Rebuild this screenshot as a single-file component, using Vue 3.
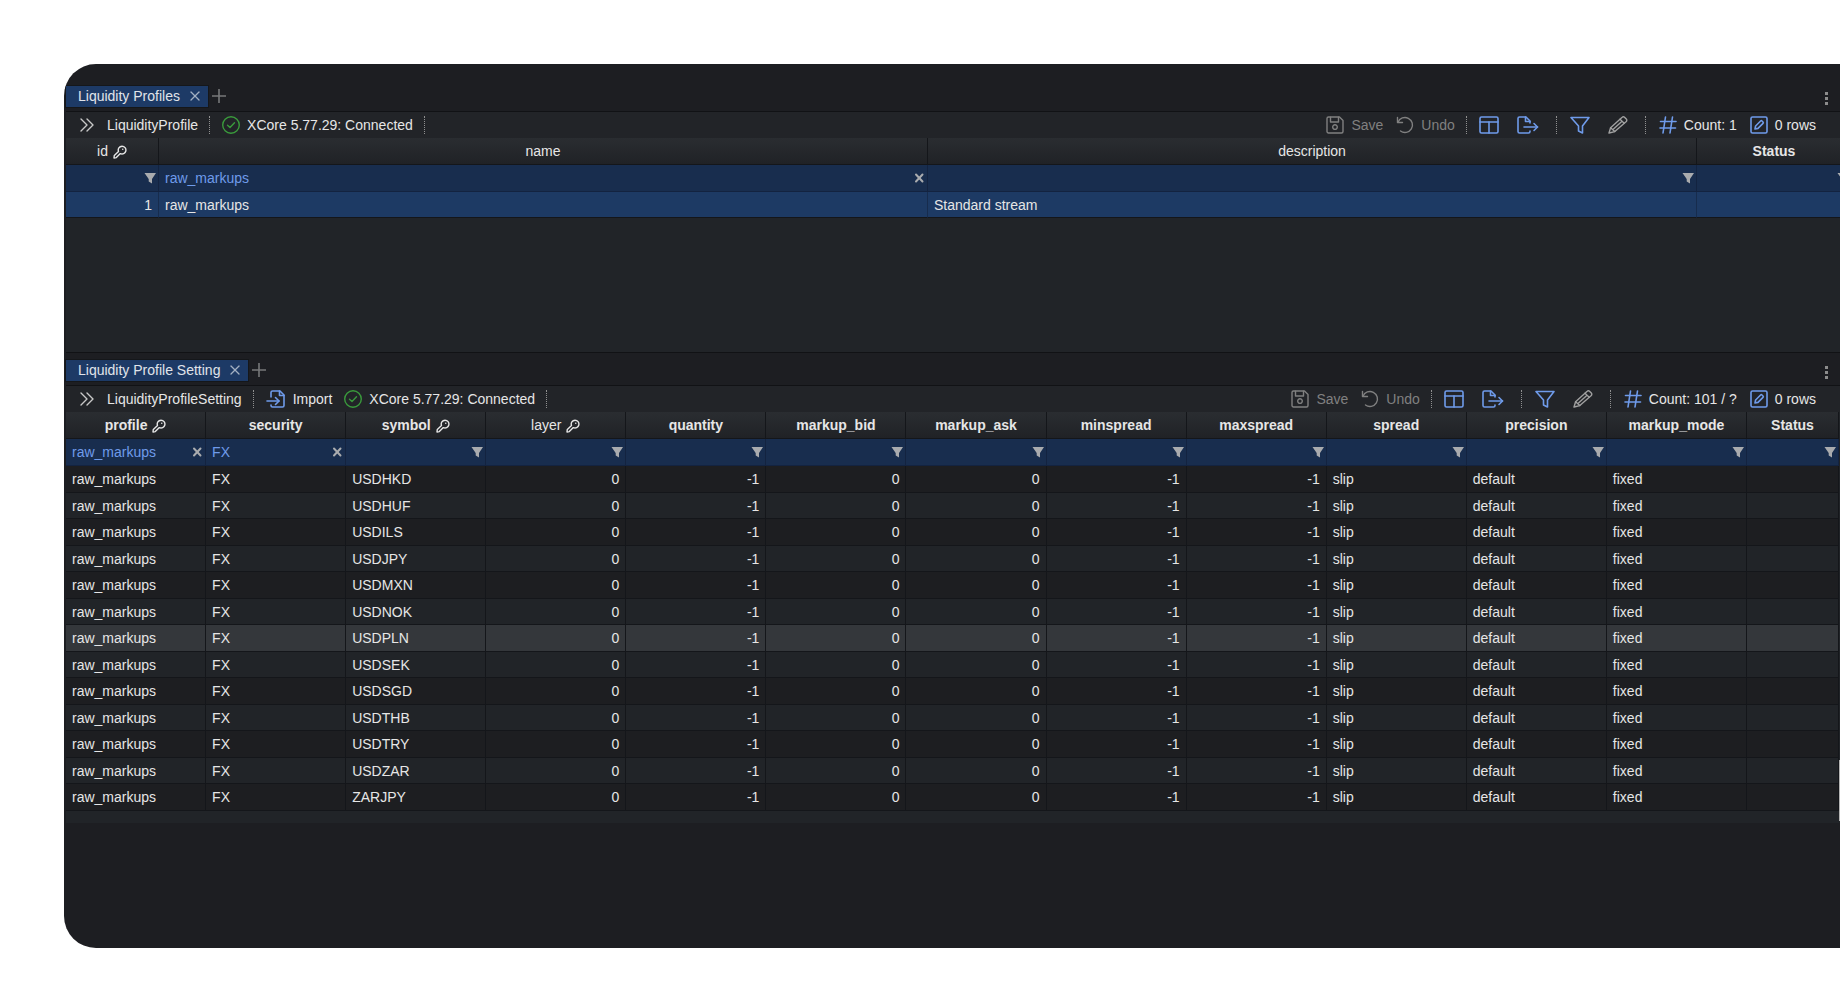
<script setup>
import { ref, h } from 'vue'

const shapes = {
  chevrons: ['M3 3l6 6-6 6', 'M9 3l6 6-6 6'],
  check: ['M9 0.700a8.300 8.300 0 1 0 0 16.600a8.300 8.300 0 1 0 0-16.600z', 'M5.500 9.200l2.500 2.300 4.500-4.800'],
  save: ['M2.500 1h11l3.500 3.500v11a1.500 1.500 0 0 1-1.500 1.500h-13A1.500 1.500 0 0 1 1 15.500v-13A1.500 1.500 0 0 1 2.500 1z', 'M4.500 1.300v4.700h8V1.300', 'M9 8.800a2.300 2.300 0 1 0 0 4.600a2.300 2.300 0 1 0 0-4.600z'],
  undo: ['M1.500 1.500v5h5', 'M2 6.200A7.500 7.500 0 1 1 4.500 15'],
  layout: ['M2.500 1h15a1.500 1.500 0 0 1 1.500 1.500v13a1.500 1.500 0 0 1-1.500 1.500h-15A1.500 1.500 0 0 1 1 15.500v-13A1.500 1.500 0 0 1 2.500 1z', 'M1 6h18', 'M10 6v11'],
  exporting: ['M13 7V5L9 1H2.500A1.500 1.500 0 0 0 1 2.500v13A1.500 1.500 0 0 0 2.500 17h9a1.500 1.500 0 0 0 1.500-1.500V15', 'M8.500 1v4.500H13', 'M7 11h13.500', 'M17 7.500l3.500 3.500-3.500 3.500'],
  importing: ['M5 7V2.500A1.500 1.500 0 0 1 6.500 1H14l4 4v10.500a1.500 1.500 0 0 1-1.500 1.500h-10A1.500 1.500 0 0 1 5 15.500V15', 'M13.500 1v4.500H18', 'M1 11h12', 'M9.500 7.500l3.500 3.500-3.500 3.500'],
  filter: ['M1 1.500h18l-6.500 8.500v7l-4-2v-5z'],
  pencil: ['M1 17l1.600-5.300L14.200 1.300a1.600 1.600 0 0 1 2.300 0l1.800 1.800a1.600 1.600 0 0 1 0 2.300L6.800 15.600z', 'M2.600 11.700l4.200 3.900', 'M12 3.300l4.200 4', 'M5.500 13l8-7.300'],
  hash: ['M6.500 1L4 17', 'M13.500 1L11 17', 'M1.500 5.500h15.500', 'M1 12h15.500'],
  edit: ['M2.500 1h13A1.500 1.500 0 0 1 17 2.500v13a1.500 1.500 0 0 1-1.500 1.500h-13A1.500 1.500 0 0 1 1 15.500v-13A1.500 1.500 0 0 1 2.500 1z', 'M5 13l.6-3 5-5a1 1 0 0 1 1.400 0l1 1a1 1 0 0 1 0 1.400L8 12.400z'],
  key: ['M9 1.200a3.900 3.900 0 1 1-1.700 7.400L3.300 12.600 1 13l.3-2.600 4.200-3.900A3.900 3.900 0 0 1 9 1.200z', 'M9.700 4.300h.1'],
  cross: ['M2 2l8 8', 'M10 2l-8 8'],
  clear: ['M3 2.500l6.500 7', 'M9.500 2.500l-6.500 7'],
  plus: ['M7 0v14', 'M0 7h14'],
}

const Glyph = (props) =>
  h('svg', { class: 'glyph', width: props.w, height: props.h, viewBox: `0 0 ${props.w} ${props.h}`, 'aria-hidden': 'true' },
    shapes[props.name].map((d) => h('path', { d, fill: 'none', stroke: 'currentColor', 'stroke-width': props.sw || 1.4, 'stroke-linejoin': 'round', 'stroke-linecap': 'round' })))
Glyph.props = ['name', 'w', 'h', 'sw']

const symbols = ['USDHKD', 'USDHUF', 'USDILS', 'USDJPY', 'USDMXN', 'USDNOK', 'USDPLN', 'USDSEK', 'USDSGD', 'USDTHB', 'USDTRY', 'USDZAR', 'ZARJPY']
const selected = 'USDPLN'

const panels = ref([
  {
    tab: 'Liquidity Profiles',
    source: 'LiquidityProfile',
    count: '1',
    wide: true,
    columns: [
      { name: 'id', key: true, num: true, size: 'id', filter: '' },
      { name: 'name', filter: 'raw_markups' },
      { name: 'description', filter: '' },
      { name: 'Status', bold: true, size: 'status-wide', filter: '' },
    ],
    rows: [{ cells: ['1', 'raw_markups', 'Standard stream', ''], active: true }],
  },
  {
    tab: 'Liquidity Profile Setting',
    source: 'LiquidityProfileSetting',
    count: '101 / ?',
    canImport: true,
    columns: [
      { name: 'profile', key: true, bold: true, filter: 'raw_markups' },
      { name: 'security', bold: true, filter: 'FX' },
      { name: 'symbol', key: true, bold: true, filter: '' },
      { name: 'layer', key: true, num: true, filter: '' },
      { name: 'quantity', bold: true, num: true, filter: '' },
      { name: 'markup_bid', bold: true, num: true, filter: '' },
      { name: 'markup_ask', bold: true, num: true, filter: '' },
      { name: 'minspread', bold: true, num: true, filter: '' },
      { name: 'maxspread', bold: true, num: true, filter: '' },
      { name: 'spread', bold: true, filter: '' },
      { name: 'precision', bold: true, filter: '' },
      { name: 'markup_mode', bold: true, filter: '' },
      { name: 'Status', bold: true, size: 'status', filter: '' },
    ],
    rows: symbols.map((s) => ({
      cells: ['raw_markups', 'FX', s, '0', '-1', '0', '0', '-1', '-1', 'slip', 'default', 'fixed', ''],
      hover: s === selected,
    })),
  },
])
</script>

<template>
  <main class="window">
    <section v-for="p in panels" :key="p.tab" class="panel" :class="{ wide: p.wide }">
      <header class="tabs">
        <div class="tab">
          <a href="#" class="tab-name">{{ p.tab }}</a>
          <button class="tab-close" :aria-label="'Close ' + p.tab"><Glyph name="cross" w="12" h="12" sw="1.300" /></button>
        </div>
        <button class="add" aria-label="Add tab"><Glyph name="plus" w="14" h="14" sw="1.600" /></button>
        <button class="more" aria-label="More"><i></i><i></i><i></i></button>
      </header>

      <div class="toolbar">
        <div class="group left">
          <button class="expand" aria-label="Expand"><Glyph name="chevrons" w="18" h="18" /></button>
          <span class="source">{{ p.source }}</span>
          <span class="sep"></span>
          <button v-if="p.canImport" class="tool import"><Glyph name="importing" w="20" h="18" class="blue" sw="1.600" />Import</button>
          <span class="tool state"><Glyph name="check" w="18" h="18" class="green" />XCore 5.77.29: Connected</span>
          <span class="sep"></span>
        </div>
        <div class="group right">
          <button class="tool muted"><Glyph name="save" w="18" h="18" />Save</button>
          <button class="tool muted undo"><Glyph name="undo" w="18" h="18" />Undo</button>
          <span class="sep"></span>
          <button class="tool blue" aria-label="Layout"><Glyph name="layout" w="20" h="18" sw="1.600" /></button>
          <button class="tool blue export" aria-label="Export"><Glyph name="exporting" w="22" h="18" sw="1.600" /></button>
          <span class="sep far"></span>
          <button class="tool blue" aria-label="Filter"><Glyph name="filter" w="20" h="18" sw="1.600" /></button>
          <button class="tool grey pencil" aria-label="Edit"><Glyph name="pencil" w="20" h="18" /></button>
          <span class="sep far"></span>
          <span class="tool"><Glyph name="hash" w="18" h="18" class="blue" sw="1.600" />Count: {{ p.count }}</span>
          <span class="tool rows"><Glyph name="edit" w="18" h="18" class="blue" sw="1.600" />0 rows</span>
        </div>
      </div>

      <div class="grid">
        <table>
          <colgroup><col v-for="c in p.columns" :key="c.name" :class="c.size" /></colgroup>
          <thead>
            <tr class="head">
              <th v-for="c in p.columns" :key="c.name" scope="col" :class="{ bold: c.bold }">
                {{ c.name }}<Glyph v-if="c.key" name="key" w="14" h="14" sw="1.400" class="key" />
              </th>
            </tr>
            <tr class="filters">
              <td v-for="c in p.columns" :key="c.name">
                <div class="filter">
                  <input v-model="c.filter" type="text" :aria-label="'Filter ' + c.name" />
                  <button v-if="c.filter" :aria-label="'Clear ' + c.name"><Glyph name="clear" w="12" h="12" sw="2" /></button>
                  <svg v-else class="funnel" width="12" height="12" viewBox="0 0 12 12" aria-hidden="true"><path d="M0.500 1h11.500L8 7v4.500L4.700 9.500V7z" fill="currentColor" /></svg>
                </div>
              </td>
            </tr>
          </thead>
          <tbody>
            <tr v-for="(r, i) in p.rows" :key="i" :class="{ active: r.active, hover: r.hover }">
              <td v-for="(v, j) in r.cells" :key="j" :class="{ num: p.columns[j].num }">{{ v }}</td>
            </tr>
          </tbody>
        </table>
        <span v-if="!p.wide" class="thumb"></span>
      </div>
    </section>
  </main>
</template>

<style>
body {
  background: #fff;
}
</style>

<style scoped>
* {
  box-sizing: border-box;
}
.window {
  margin: 64px 0 60px 64px;
  padding: 15px 0 125px;
  border-radius: 32px 0 0 32px;
  background: #1d1e22;
  color: #e6e6e6;
  font: 14px/18px "Liberation Sans", Arial, sans-serif;
  overflow: hidden;
}
button {
  display: flex;
  align-items: center;
  padding: 0;
  border: 0;
  background: none;
  color: inherit;
  font: inherit;
}
.glyph {
  display: block;
  flex: none;
}
.tabs {
  display: flex;
  align-items: center;
  height: 32px;
  padding: 2px 9px 0 2px;
}
.tab {
  display: flex;
  align-items: center;
  gap: 9px;
  height: 21px;
  padding: 0 7px 0 12px;
  background: #1d3a66;
  box-shadow: 0 0 0 1px #15171a;
}
.tab-name {
  color: #e0e4ea;
  text-decoration: none;
}
.tab-close {
  color: #a3b0c2;
}
.add {
  margin-left: 4px;
  color: #77787a;
}
.more {
  flex-direction: column;
  gap: 2px;
  margin-left: auto;
  padding: 4px 3px 0;
}
.more i {
  width: 3px;
  height: 3px;
  background: #8c8c8c;
}
.toolbar {
  display: flex;
  justify-content: space-between;
  height: 27px;
  margin-left: 2px;
  border-top: 1px solid #111215;
  background: #222428;
}
.group {
  display: flex;
  align-items: center;
}
.right {
  padding-right: 24px;
}
.expand {
  margin: 0 11px 0 12px;
  color: #c8c8c8;
}
.sep {
  height: 18px;
  margin: 0 12px 0 11px;
  border-left: 1px dotted #909090;
}
.far {
  margin: 0 13px 0 17px;
}
.tool {
  display: flex;
  align-items: center;
  gap: 7px;
}
.import {
  margin-right: 12px;
}
.muted {
  color: #808080;
}
.undo {
  margin-left: 13px;
}
.blue {
  color: #6f9bea;
}
.green {
  color: #3a9a3c;
}
.grey {
  color: #a0a0a0;
}
.export {
  margin-left: 18px;
}
.pencil {
  margin-left: 18px;
}
.rows {
  margin-left: 13px;
}
.grid {
  position: relative;
  margin-left: 2px;
  padding: 0 1px 12px 0;
  background: #212428;
  overflow: hidden;
}
.wide .grid {
  min-height: 215px;
  padding: 0;
  border-bottom: 1px solid #111215;
}
table {
  width: 100%;
  border-collapse: separate;
  border-spacing: 0;
  table-layout: fixed;
}
.wide table {
  width: calc(100% + 12px);
}
.id {
  width: 93px;
}
.status {
  width: 92px;
}
.status-wide {
  width: 155px;
}
th,
td {
  height: inherit;
  padding: 0 6px;
  border-right: 1px solid #14161a;
  border-bottom: 1px solid #14161a;
  text-align: left;
  white-space: nowrap;
}
.head {
  height: 27px;
}
.head th {
  background: linear-gradient(#2a2d31, #202226);
  font-weight: 400;
  text-align: center;
}
.head .bold {
  font-weight: 700;
}
.key {
  display: inline-block;
  margin-left: 5px;
  vertical-align: -3px;
}
.filters {
  height: 27px;
}
.filters td {
  background: #182d4e;
  border-color: #132340;
}
.filter {
  display: flex;
  align-items: center;
  margin-right: -4px;
  color: #a9abae;
}
.filter input {
  flex: 1;
  min-width: 0;
  height: 18px;
  padding: 0;
  border: 0;
  outline: 0;
  background: none;
  color: #6f9bea;
  font: inherit;
}
.funnel {
  flex: none;
}
tbody tr {
  height: 26px;
  background: #212428;
}
tbody tr:nth-child(odd) {
  height: 27px;
  background: #1d1e21;
}
.wide tbody tr:nth-child(n) {
  height: 26px;
}
tbody .hover:nth-child(n) {
  background: #34373b;
}
tbody .active:nth-child(n) {
  background: #1d3a64;
}
.active td {
  border-right-color: #172c4d;
}
.num {
  text-align: right;
}
.thumb {
  position: absolute;
  right: 0;
  bottom: 2px;
  width: 1px;
  height: 61px;
  background: #b4b4b4;
}
</style>
